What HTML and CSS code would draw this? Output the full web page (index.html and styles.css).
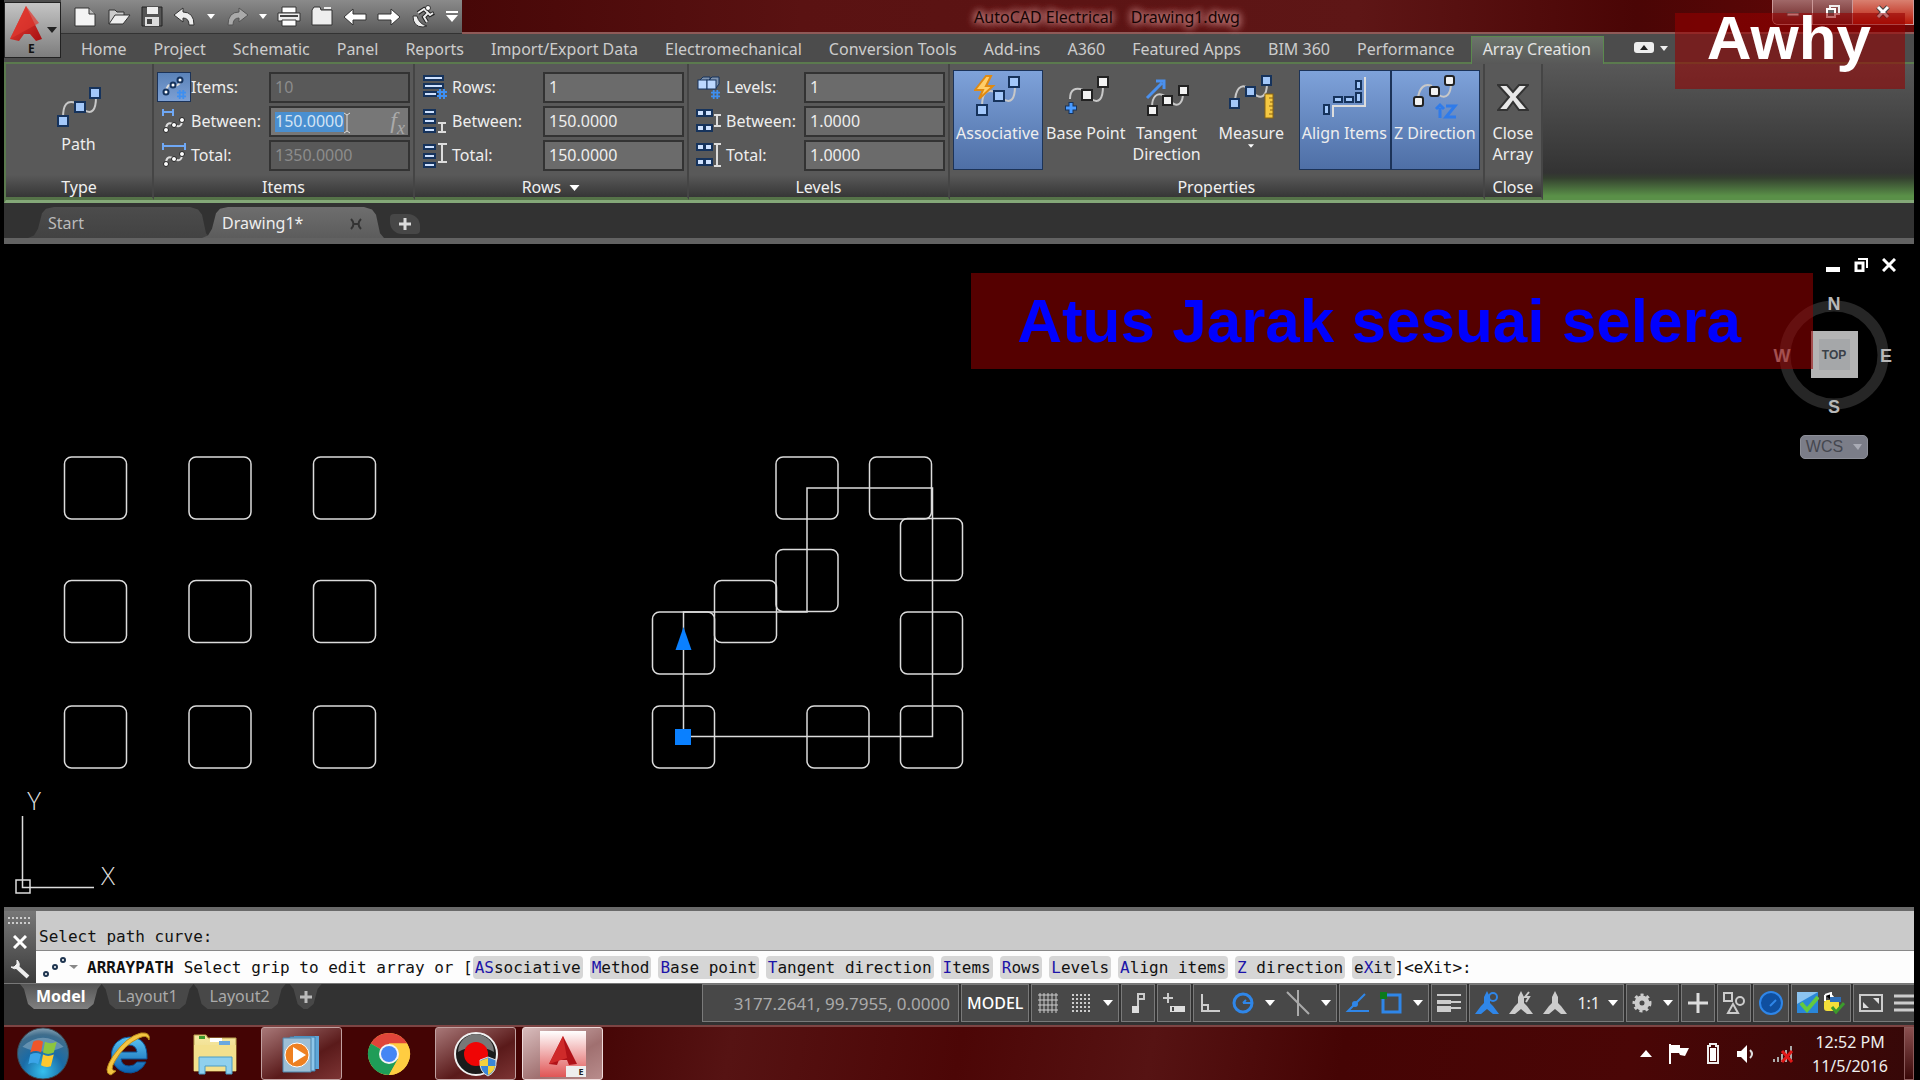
FILE: index.html
```html
<!DOCTYPE html>
<html lang="en">
<head>
    <meta charset="UTF-8">
    <meta name="viewport" content="width=device-width, initial-scale=1.0">
    <title>AutoCAD Electrical - Drawing1.dwg</title>
    <link rel="stylesheet" href="styles.css">
</head>
<body>
    <!-- shared icon shapes -->
    <svg class="defs" aria-hidden="true">
        <defs>
            <linearGradient id="gRed" x1="0" y1="0" x2="1" y2="1">
                <stop offset="0" stop-color="#f04a3c"/><stop offset="1" stop-color="#a50d10"/>
            </linearGradient>
            <radialGradient id="gOrb" cx="0.5" cy="0.85" r="0.9">
                <stop offset="0" stop-color="#35c0ee"/><stop offset="0.45" stop-color="#1a6ba6"/><stop offset="0.8" stop-color="#3f6d8c"/><stop offset="1" stop-color="#9db4c2"/>
            </radialGradient>
            <linearGradient id="gIe" x1="0" y1="0" x2="0" y2="1">
                <stop offset="0" stop-color="#5cc4f2"/><stop offset="1" stop-color="#0a5fae"/>
            </linearGradient>
            <linearGradient id="gFold" x1="0" y1="0" x2="0" y2="1">
                <stop offset="0" stop-color="#f7e9a4"/><stop offset="1" stop-color="#e6cf72"/>
            </linearGradient>
            <linearGradient id="gAcad" x1="0" y1="0" x2="0" y2="1">
                <stop offset="0" stop-color="#fff"/><stop offset="1" stop-color="#e05555"/>
            </linearGradient>
        </defs>
        <symbol id="curve" viewBox="0 0 48 44">
            <path d="M8 32C8 18 12 14 21 17M29 24C37 29 41 24 41 11" fill="none" stroke="#c8c8c8" stroke-width="2"/>
            <g class="sq">
                <rect x="3" y="30" width="10" height="10"/>
                <rect x="20" y="16" width="10" height="10"/>
                <rect x="35" y="2" width="10" height="10"/>
            </g>
        </symbol>
        <symbol id="minicurve" viewBox="0 0 24 18">
            <path d="M4 14Q4 5 11 8M12 9Q20 13 20 4" fill="none" stroke="#ddd" stroke-width="2"/>
            <g fill="#fff" stroke="#222" stroke-width="1">
                <circle cx="4" cy="14" r="2.5"/><circle cx="12" cy="9" r="2.5"/><circle cx="20" cy="4" r="2.5"/>
            </g>
        </symbol>
        <symbol id="down" viewBox="0 0 10 6"><path d="M0 0H10L5 6Z" fill="#fff"/></symbol>
        <symbol id="hash" viewBox="0 0 10 10"><path d="M3 0V10M7 0V10M0 3H10M0 7H10" stroke="#3e8ff0" stroke-width="2" fill="none"/></symbol>
        <symbol id="person" viewBox="0 0 24 24">
            <path d="M12 0L15 6L15 12L18 15L24 23H18L12 18L6 23H0L6 15L9 12L9 6Z" fill="currentColor"/>
        </symbol>
    </svg>

    <div class="window">
        <header class="top">
            <button class="app-button" aria-label="Application menu">
                <svg width="54" height="54" viewBox="0 0 54 54">
                    <path d="M21 3L5 36L14 38L19 31H25L31 38L37 36Z" fill="url(#gRed)"/>
                    <path d="M21 3L5 36L34 20Z" fill="#e0382f" opacity="0.7"/>
                    <path d="M42 24H52L47 30Z" fill="#222"/>
                    <text x="23" y="50" class="app-letter">E</text>
                </svg>
            </button>
            <div class="top-rows">
                <div class="titlebar">
                    <div class="quick">
                        <button aria-label="New"><svg width="24" height="22" viewBox="0 0 24 22"><path d="M2 2H16L22 8V20H2Z" fill="#f4f4f4" stroke="#333"/><path d="M16 2V8H22" fill="#bbb" stroke="#333"/></svg></button>
                        <button aria-label="Open"><svg width="24" height="22" viewBox="0 0 24 22"><path d="M2 18V4H8L10 6H17V9" fill="#ccc" stroke="#333"/><path d="M2 18L8 9H23L16 18Z" fill="#eee" stroke="#333"/></svg></button>
                        <button aria-label="Save"><svg width="22" height="22" viewBox="0 0 22 22"><path d="M1 1H21V20H1Z" fill="#555" stroke="#222"/><path d="M6 1H17V8H6Z" fill="#eee"/><path d="M4 11H18V20H4Z" fill="#ddd"/><path d="M6 13H11V18H6Z" fill="#444"/></svg></button>
                        <button aria-label="Undo"><svg width="24" height="20" viewBox="0 0 24 20"><path d="M1 8L10 1V5Q21 5 21 18H16Q16 11 10 11V15Z" fill="#eee" stroke="#333"/></svg></button>
                        <button class="mini" aria-label="Undo list"><svg width="8" height="5"><use href="#down"/></svg></button>
                        <button aria-label="Redo"><svg width="24" height="20" viewBox="0 0 24 20"><path d="M23 8L14 1V5Q3 5 3 18H8Q8 11 14 11V15Z" fill="#aaa" stroke="#555"/></svg></button>
                        <button class="mini" aria-label="Redo list"><svg width="8" height="5"><use href="#down"/></svg></button>
                        <button aria-label="Plot"><svg width="24" height="22" viewBox="0 0 24 22"><path d="M5 1H19V7H5Z" fill="#fff" stroke="#333"/><path d="M1 7H23V15H1Z" fill="#eee" stroke="#333"/><path d="M3 10H21" stroke="#444" stroke-width="2"/><path d="M5 14H19V20H5Z" fill="#fff" stroke="#333"/></svg></button>
                        <button aria-label="Project manager"><svg width="22" height="22" viewBox="0 0 22 22"><path d="M1 4L3 1H9L10 4H21V19H1Z" fill="#eee" stroke="#333"/><path d="M13 2H20" stroke="#eee" stroke-width="2"/></svg></button>
                        <button aria-label="Previous"><svg width="24" height="20" viewBox="0 0 24 20"><path d="M1 10L10 2V7H23V13H10V18Z" fill="#fff" stroke="#333"/></svg></button>
                        <button aria-label="Next"><svg width="24" height="20" viewBox="0 0 24 20"><path d="M23 10L14 2V7H1V13H14V18Z" fill="#fff" stroke="#333"/></svg></button>
                        <button aria-label="Surfer"><svg width="24" height="24" viewBox="0 0 24 24"><path d="M2 11Q2 22 12 22L16 21Q8 19 6 11Z" fill="#eee" stroke="#333"/><path d="M7 8L13 4L17 8L13 12L16 17M13 4L19 10L23 8" fill="none" stroke="#222" stroke-width="4"/><path d="M7 8L13 4L17 8L13 12L16 17M13 4L19 10L22 8" fill="none" stroke="#eee" stroke-width="2"/><circle cx="17" cy="3" r="2.5" fill="#fff" stroke="#333"/></svg></button>
                        <button class="mini" aria-label="Customize"><svg width="14" height="12" viewBox="0 0 14 12"><path d="M1 1H13" stroke="#fff" stroke-width="2"/><path d="M1 4H13L7 11Z" fill="#fff"/></svg></button>
                    </div>
                    <h1 class="title"><span>AutoCAD Electrical</span><span>Drawing1.dwg</span></h1>
                    <div class="win-buttons">
                        <button aria-label="Minimize"><svg width="14" height="14" viewBox="0 0 14 14"><path d="M1 8H13V11H1Z" fill="#fff" stroke="#555"/></svg></button>
                        <button aria-label="Restore"><svg width="16" height="14" viewBox="0 0 16 14"><path d="M5 1H14V9H5Z" fill="none" stroke="#eee" stroke-width="2"/><path d="M2 4H10V12H2Z" fill="#666" stroke="#fff" stroke-width="2"/></svg></button>
                        <button class="close" aria-label="Close"><svg width="16" height="14" viewBox="0 0 16 14"><path d="M3 2L13 12M13 2L3 12" stroke="#444" stroke-width="5"/><path d="M3 2L13 12M13 2L3 12" stroke="#fff" stroke-width="3"/></svg></button>
                    </div>
                </div>
                <nav class="tabs">
                    <a href="#">Home</a>
                    <a href="#">Project</a>
                    <a href="#">Schematic</a>
                    <a href="#">Panel</a>
                    <a href="#">Reports</a>
                    <a href="#">Import/Export Data</a>
                    <a href="#">Electromechanical</a>
                    <a href="#">Conversion Tools</a>
                    <a href="#">Add-ins</a>
                    <a href="#">A360</a>
                    <a href="#">Featured Apps</a>
                    <a href="#">BIM 360</a>
                    <a href="#">Performance</a>
                    <a href="#" class="active">Array Creation</a>
                    <button class="collapse" aria-label="Minimize ribbon">
                        <svg width="34" height="12" viewBox="0 0 34 12"><rect x="0" y="0" width="20" height="11" rx="3" fill="#eee"/><path d="M6 8H14L10 3Z" fill="#222"/><path d="M26 4H34L30 9Z" fill="#eee"/></svg>
                    </button>
                </nav>
            </div>
        </header>

        <section class="ribbon">
            <div class="panel type-panel">
                <div class="panel-body">
                    <button class="tool">
                        <svg class="blue" width="48" height="44"><use href="#curve"/></svg>
                        Path
                    </button>
                </div>
                <h2>Type</h2>
            </div>

            <div class="panel">
                <div class="panel-body fields">
                    <button class="field-icon on" aria-label="Item count"><svg width="26" height="26" viewBox="0 0 26 26"><path d="M5 18Q6 9 12 11Q18 13 20 6" fill="none" stroke="#ddd" stroke-width="2"/><g fill="#fff" stroke="#16335c" stroke-width="2"><circle cx="5" cy="18" r="2.5"/><circle cx="12" cy="11" r="2.5"/><circle cx="19" cy="6" r="2.5"/></g><use href="#hash" x="16" y="16" width="9" height="9"/></svg></button>
                    <label for="items">Items:</label>
                    <input id="items" type="text" value="10" disabled>

                    <svg class="field-icon" width="26" height="26" viewBox="0 0 26 26"><path d="M2 1V8M12 1V8M2 4H12" stroke="#6fa8f5" stroke-width="2" fill="none"/><use href="#minicurve" x="1" y="8" width="24" height="18"/></svg>
                    <label for="itemsBetween">Between:</label>
                    <div class="fx-field">
                        <input id="itemsBetween" class="selected" type="text" value="150.0000">
                        <svg class="caret" width="8" height="22" viewBox="0 0 8 22"><path d="M1 1L4 3L7 1M4 3V19M1 21L4 19L7 21" fill="none" stroke="#ddd"/></svg>
                        <span class="fx">f<sub>x</sub></span>
                    </div>

                    <svg class="field-icon" width="26" height="26" viewBox="0 0 26 26"><path d="M2 1V8M24 1V8M2 4H24" stroke="#6fa8f5" stroke-width="2" fill="none"/><use href="#minicurve" x="1" y="8" width="24" height="18"/></svg>
                    <label for="itemsTotal">Total:</label>
                    <input id="itemsTotal" type="text" value="1350.0000" disabled>
                </div>
                <h2>Items</h2>
            </div>

            <div class="panel">
                <div class="panel-body fields rows-fields">
                    <svg class="field-icon" width="26" height="26" viewBox="0 0 26 26"><g fill="#cfe2ff" stroke="#16335c" stroke-width="2"><rect x="2" y="2" width="19" height="4"/><rect x="2" y="10" width="19" height="4"/><rect x="2" y="18" width="13" height="4"/></g><use href="#hash" x="15" y="15" width="10" height="10"/></svg>
                    <label for="rows">Rows:</label>
                    <input id="rows" type="text" value="1">

                    <svg class="field-icon" width="26" height="26" viewBox="0 0 26 26"><g fill="#cfe2ff" stroke="#16335c" stroke-width="2"><rect x="2" y="2" width="11" height="4"/><rect x="2" y="11" width="11" height="4"/><rect x="2" y="20" width="11" height="4"/></g><path d="M16 15H24M16 24H24M20 15V24" stroke="#ddd" stroke-width="2"/></svg>
                    <label for="rowsBetween">Between:</label>
                    <input id="rowsBetween" type="text" value="150.0000">

                    <svg class="field-icon" width="26" height="26" viewBox="0 0 26 26"><g fill="#cfe2ff" stroke="#16335c" stroke-width="2"><rect x="2" y="3" width="11" height="4"/><rect x="2" y="12" width="11" height="4"/><rect x="2" y="21" width="11" height="4"/></g><path d="M16 2H25M16 20H25M20 2V20" stroke="#ddd" stroke-width="2"/></svg>
                    <label for="rowsTotal">Total:</label>
                    <input id="rowsTotal" type="text" value="150.0000">
                </div>
                <h2>Rows <svg width="11" height="6"><use href="#down"/></svg></h2>
            </div>

            <div class="panel">
                <div class="panel-body fields">
                    <svg class="field-icon" width="26" height="26" viewBox="0 0 26 26"><path d="M3 7L7 3H14V10M12 7L16 3H23V10L20 14" fill="#7f93ad" stroke="#16335c"/><g fill="#bcd8ff" stroke="#16335c"><rect x="2" y="6" width="9" height="9"/><rect x="11" y="6" width="9" height="9"/></g><use href="#hash" x="15" y="16" width="9" height="9"/></svg>
                    <label for="levels">Levels:</label>
                    <input id="levels" type="text" value="1">

                    <svg class="field-icon" width="26" height="26" viewBox="0 0 26 26"><g fill="#cfe2ff" stroke="#16335c" stroke-width="2"><rect x="1" y="2" width="7" height="6"/><rect x="9" y="2" width="7" height="6"/><rect x="1" y="17" width="7" height="6"/><rect x="9" y="17" width="7" height="6"/></g><path d="M18 7H25M18 18H25M21 7V18" stroke="#ddd" stroke-width="2"/></svg>
                    <label for="levelsBetween">Between:</label>
                    <input id="levelsBetween" type="text" value="1.0000">

                    <svg class="field-icon" width="26" height="26" viewBox="0 0 26 26"><g fill="#cfe2ff" stroke="#16335c" stroke-width="2"><rect x="1" y="2" width="7" height="6"/><rect x="9" y="2" width="7" height="6"/><rect x="1" y="17" width="7" height="6"/><rect x="9" y="17" width="7" height="6"/></g><path d="M18 2H25M18 24H25M21 2V24" stroke="#ddd" stroke-width="2"/></svg>
                    <label for="levelsTotal">Total:</label>
                    <input id="levelsTotal" type="text" value="1.0000">
                </div>
                <h2>Levels</h2>
            </div>

            <div class="panel">
                <div class="panel-body tools">
                    <button class="tool on">
                        <svg class="blue" width="48" height="44"><use href="#curve"/><path d="M12 1L1 15H9L5 24L19 11H12L17 1Z" fill="#ffcf6a" stroke="#e08a12" stroke-width="2"/></svg>
                        Associative
                    </button>
                    <button class="tool">
                        <svg class="white" width="48" height="44" viewBox="0 0 48 44"><path d="M8 24C8 14 14 12 21 15M29 24C37 29 41 24 41 11" fill="none" stroke="#c8c8c8" stroke-width="2"/><g class="sq"><rect x="20" y="15" width="10" height="10"/><rect x="36" y="2" width="10" height="10"/></g><path d="M9 27V39M3 33H15" stroke="#16335c" stroke-width="5"/><path d="M9 28V38M4 33H14" stroke="#4a9bff" stroke-width="3"/></svg>
                        Base Point
                    </button>
                    <button class="tool">
                        <svg class="white" width="48" height="44" viewBox="0 0 48 44"><path d="M9 32C9 22 14 16 22 21M27 26C36 35 40 26 40 18" fill="none" stroke="#c8c8c8" stroke-width="2"/><g class="sq"><rect x="5" y="31" width="9" height="9"/><rect x="20" y="21" width="9" height="9"/><rect x="36" y="11" width="9" height="9"/></g><path d="M4 23L19 8M13 6H21V14" fill="none" stroke="#4a90ee" stroke-width="3"/></svg>
                        Tangent<br>Direction
                    </button>
                    <button class="tool measure">
                        <svg class="blue" width="48" height="44" viewBox="0 0 48 44"><path d="M8 28C8 14 14 8 21 13M26 18C34 25 40 22 40 8" fill="none" stroke="#c8c8c8" stroke-width="2"/><g class="sq"><rect x="3" y="24" width="9" height="9"/><rect x="19" y="12" width="9" height="9"/><rect x="35" y="1" width="9" height="9"/></g><rect x="38" y="19" width="8" height="24" fill="#f5c842" stroke="#8a6510"/><path d="M42 23H46M43 27H46M42 31H46M43 35H46M42 39H46" stroke="#8a6510"/></svg>
                        Measure
                        <svg width="6" height="4"><use href="#down"/></svg>
                    </button>
                    <button class="tool on">
                        <svg class="blue" width="48" height="44" viewBox="0 0 48 44"><path d="M13 42V31H45V2" fill="none" stroke="#ddd" stroke-width="2"/><g class="sq"><rect x="4" y="30" width="5" height="9"/><rect x="14" y="22" width="8" height="5"/><rect x="25" y="22" width="8" height="5"/><rect x="36" y="18" width="5" height="9"/><rect x="36" y="6" width="5" height="8"/></g></svg>
                        Align Items
                    </button>
                    <button class="tool on">
                        <svg class="white" width="48" height="44" viewBox="0 0 48 44"><path d="M7 24C8 12 14 8 21 11M28 20C36 25 40 18 40 8" fill="none" stroke="#c8c8c8" stroke-width="2"/><g class="sq"><rect x="3" y="22" width="9" height="9" rx="2"/><rect x="19" y="12" width="9" height="9" rx="2"/><rect x="34" y="1" width="9" height="9" rx="2"/></g><path d="M29 43V33M25 34L29 30L33 34M35 31H44L35 42H45" fill="none" stroke="#2f7bea" stroke-width="3"/></svg>
                        Z Direction
                    </button>
                </div>
                <h2>Properties</h2>
            </div>

            <div class="panel">
                <div class="panel-body">
                    <button class="tool close-array">
                        <svg width="32" height="44" viewBox="0 0 32 44"><path d="M1 10H10L16 17L22 10H31L20 22L31 35H22L16 27L10 35H1L12 22Z" fill="#e8e8e8" stroke="#333" stroke-width="2"/></svg>
                        Close<br>Array
                    </button>
                </div>
                <h2>Close</h2>
            </div>
        </section>

        <div class="file-tabs">
            <button class="file-tab">Start</button>
            <div class="file-tab active">
                <button class="file-name">Drawing1*</button>
                <button class="file-close" aria-label="Close drawing"><svg width="12" height="12" viewBox="0 0 12 12"><path d="M1 1Q6 6 1 11M11 1Q6 6 11 11M3 6H9" fill="none" stroke="#333" stroke-width="2"/></svg></button>
            </div>
            <button class="file-add" aria-label="New drawing"><svg width="12" height="12" viewBox="0 0 12 12"><path d="M6 0V12M0 6H12" stroke="#ddd" stroke-width="3"/></svg></button>
        </div>

        <main class="canvas">
            <svg class="drawing">
                <defs><rect id="box" width="62" height="62" rx="7"/></defs>
                <g transform="translate(-4 -244)" fill="none" stroke="#dcdcdc" stroke-width="1.5">
                    <!-- 3 x 3 rectangular array -->
                    <use href="#box" x="64.5" y="457"/><use href="#box" x="189" y="457"/><use href="#box" x="313.5" y="457"/>
                    <use href="#box" x="64.5" y="580.5"/><use href="#box" x="189" y="580.5"/><use href="#box" x="313.5" y="580.5"/>
                    <use href="#box" x="64.5" y="706"/><use href="#box" x="189" y="706"/><use href="#box" x="313.5" y="706"/>
                    <!-- path array -->
                    <path d="M683.5 736.5V612H807V488H932.5V736.5Z"/>
                    <use href="#box" x="652.5" y="706"/>
                    <use href="#box" x="652.5" y="612"/>
                    <use href="#box" x="714.5" y="580.5"/>
                    <use href="#box" x="776" y="549.5"/>
                    <use href="#box" x="776" y="457"/>
                    <use href="#box" x="869.5" y="457"/>
                    <use href="#box" x="900.5" y="518.5"/>
                    <use href="#box" x="900.5" y="612"/>
                    <use href="#box" x="900.5" y="706"/>
                    <use href="#box" x="807" y="706"/>
                    <path d="M683.5 627L691.5 650H675.5Z" fill="#0a80ff" stroke="none"/>
                    <rect x="675" y="729" width="16" height="16" fill="#0a80ff" stroke="none"/>
                    <!-- UCS icon -->
                    <path d="M22.5 816V887.5H94M16 880H30V893H16Z"/>
                    <text class="ucs" x="34" y="810">Y</text>
                    <text class="ucs" x="108" y="885">X</text>
                </g>
            </svg>

            <div class="view-tools">
                <div class="view-buttons">
                    <button aria-label="Minimize view"><svg width="14" height="14"><rect x="0" y="9" width="14" height="5" fill="#fff"/></svg></button>
                    <button aria-label="Restore view"><svg width="14" height="14"><path d="M4 1H13V10" fill="none" stroke="#fff" stroke-width="2"/><path d="M2 5H9V13H2Z" fill="none" stroke="#fff" stroke-width="3"/></svg></button>
                    <button aria-label="Close view"><svg width="14" height="14"><path d="M1 1L13 13M13 1L1 13" stroke="#fff" stroke-width="3"/></svg></button>
                </div>
                <svg class="compass" width="124" height="130" viewBox="-2 0 124 130">
                    <circle cx="60" cy="64" r="49" fill="none" stroke="#262626" stroke-width="11"/>
                    <rect x="37" y="40" width="47" height="47" fill="#b4b4b4"/>
                    <rect x="45" y="48" width="31" height="31" fill="#a5a7a9"/>
                    <text class="top-face" x="60" y="68">TOP</text>
                    <text x="60" y="19">N</text>
                    <text x="60" y="122">S</text>
                    <text x="8" y="71">W</text>
                    <text x="112" y="71">E</text>
                </svg>
                <button class="wcs">WCS <svg width="9" height="6"><path d="M0 0H9L5 6Z" fill="#a9abb5"/></svg></button>
            </div>
            <p class="banner">Atus Jarak sesuai selera</p>
        </main>

        <section class="command">
            <div class="command-side">
                <svg width="24" height="8" viewBox="0 0 24 8"><path d="M0 1H24M0 6H24" stroke="#ccc" stroke-width="2" stroke-dasharray="2 2"/></svg>
                <button aria-label="Close command line"><svg width="14" height="14"><path d="M1 1L13 13M13 1L1 13" stroke="#fff" stroke-width="3"/></svg></button>
                <button aria-label="Customize command line"><svg width="20" height="20" viewBox="0 0 20 20"><path d="M7 8L18 18" stroke="#eee" stroke-width="4"/><path d="M7 1Q11 5 8 9Q4 11 1 8L4 8L7 5Z" fill="#eee" stroke="#eee"/></svg></button>
            </div>
            <div class="command-text">
                <div class="history">Select path curve:</div>
                <div class="prompt">
                    <svg width="36" height="22" viewBox="0 0 36 22"><g fill="#fff" stroke="#1f3550" stroke-width="2"><circle cx="3" cy="18" r="2"/><circle cx="12" cy="11" r="2"/><circle cx="20" cy="4" r="2"/></g><path d="M26 9H35L31 13Z" fill="#888"/></svg>
                    <b>ARRAYPATH</b>
                    <span>Select grip to edit array or [</span>
                    <button><i>AS</i>sociative</button>
                    <button><i>M</i>ethod</button>
                    <button><i>B</i>ase point</button>
                    <button><i>T</i>angent direction</button>
                    <button><i>I</i>tems</button>
                    <button><i>R</i>ows</button>
                    <button><i>L</i>evels</button>
                    <button><i>A</i>lign items</button>
                    <button><i>Z</i> direction</button>
                    <button>e<i>X</i>it</button>
                    <span>]&lt;eXit&gt;:</span>
                </div>
            </div>
        </section>

        <footer class="status">
            <div class="layouts">
                <button class="active">Model</button>
                <button>Layout1</button>
                <button>Layout2</button>
                <button class="add" aria-label="New layout"><svg width="12" height="12"><path d="M6 0V12M0 6H12" stroke="#bbb" stroke-width="3"/></svg></button>
            </div>
            <div class="status-cells">
                <div class="cell coords">3177.2641, 99.7955, 0.0000</div>
                <button class="cell model">MODEL</button>
                <div class="cell">
                    <button aria-label="Grid"><svg width="22" height="22"><path d="M3 1V21M7 1V21M11 1V21M15 1V21M19 1V21M1 3H21M1 8H21M1 13H21M1 18H21" stroke="#ccc" fill="none"/></svg></button>
                    <button aria-label="Snap mode"><svg width="22" height="22"><path d="M2 3H22M2 7H22M2 11H22M2 15H22M2 19H22" stroke="#ccc" stroke-width="2" stroke-dasharray="2 2"/></svg></button>
                    <button aria-label="Snap list"><svg width="10" height="6"><use href="#down"/></svg></button>
                </div>
                <button class="cell" aria-label="Infer constraints"><svg width="22" height="22"><path d="M11 15V2H17V7H12" fill="none" stroke="#ccc" stroke-width="2"/><rect x="5" y="14" width="7" height="7" fill="#ddd"/></svg></button>
                <button class="cell" aria-label="Dynamic input"><svg width="22" height="22"><path d="M5 1V11M0 6H10" stroke="#ccc" stroke-width="2"/><rect x="7" y="14" width="15" height="6" fill="#ddd"/><path d="M10 15V19" stroke="#444" stroke-width="2"/></svg></button>
                <div class="cell">
                    <button aria-label="Ortho"><svg width="22" height="22"><path d="M3 2V19H21M3 13H9V19" fill="none" stroke="#ccc" stroke-width="2"/></svg></button>
                    <button aria-label="Polar tracking"><svg width="22" height="22"><circle cx="11" cy="11" r="9" fill="none" stroke="#2f86e8" stroke-width="3"/><path d="M11 11H21M14 8L11 11" stroke="#2f86e8" stroke-width="2"/></svg></button>
                    <button aria-label="Polar list"><svg width="10" height="6"><use href="#down"/></svg></button>
                    <button aria-label="Isometric"><svg width="24" height="26"><path d="M1 2L23 24M12 0V26" stroke="#aaa" stroke-width="2"/></svg></button>
                    <button aria-label="Isometric list"><svg width="10" height="6"><use href="#down"/></svg></button>
                </div>
                <div class="cell">
                    <button aria-label="Object snap tracking"><svg width="24" height="22"><path d="M20 2L3 19H24" fill="none" stroke="#2f86e8" stroke-width="2"/><circle cx="10" cy="12" r="3" fill="#2f86e8"/></svg></button>
                    <button aria-label="Object snap"><svg width="22" height="22"><rect x="3" y="3" width="17" height="17" fill="none" stroke="#2f86e8" stroke-width="3"/><rect x="0" y="0" width="7" height="7" fill="#0c7a1c"/></svg></button>
                    <button aria-label="Snap settings"><svg width="10" height="6"><use href="#down"/></svg></button>
                </div>
                <button class="cell" aria-label="Lineweight"><svg width="24" height="22"><path d="M0 3H24M0 10H24M14 16H24" stroke="#ccc" stroke-width="2"/><path d="M0 10H14" stroke="#ccc" stroke-width="4"/><path d="M0 17H14" stroke="#ccc" stroke-width="6"/></svg></button>
                <div class="cell scales">
                    <button class="lit" aria-label="Annotation visibility"><svg width="24" height="24"><use href="#person"/><circle cx="18" cy="6" r="4" fill="#484848" stroke="#2f86e8" stroke-width="2"/></svg></button>
                    <button aria-label="Auto scale"><svg width="24" height="24"><use href="#person"/><path d="M20 1L16 6H20L17 11" fill="none" stroke="#ccc" stroke-width="2"/></svg></button>
                    <button aria-label="Annotation"><svg width="24" height="24"><use href="#person"/></svg></button>
                    <button class="scale">1:1 <svg width="10" height="6"><use href="#down"/></svg></button>
                </div>
                <div class="cell">
                    <button aria-label="Workspace"><svg width="20" height="20" viewBox="0 0 20 20"><circle cx="10" cy="10" r="5" fill="none" stroke="#ccc" stroke-width="5"/><circle cx="10" cy="10" r="8" fill="none" stroke="#ccc" stroke-width="3" stroke-dasharray="3 3"/></svg></button>
                    <button aria-label="Workspace list"><svg width="10" height="6"><use href="#down"/></svg></button>
                </div>
                <button class="cell" aria-label="Annotation monitor"><svg width="22" height="22"><path d="M11 1V21M1 11H21" stroke="#ddd" stroke-width="3"/></svg></button>
                <button class="cell" aria-label="Isolate objects"><svg width="22" height="22"><path d="M1 1H9V9H1ZM10 12L15 21H5Z" fill="none" stroke="#ccc" stroke-width="2"/><circle cx="17" cy="9" r="4" fill="none" stroke="#ccc" stroke-width="2"/></svg></button>
                <button class="cell" aria-label="Hardware acceleration"><svg width="24" height="24"><circle cx="12" cy="12" r="11" fill="#0f4f9f" stroke="#2f86e8" stroke-width="2"/><path d="M11 15L17 9" stroke="#2f86e8" stroke-width="2"/></svg></button>
                <div class="cell tight">
                    <button aria-label="Validate"><svg width="22" height="22"><rect width="21" height="21" fill="#2a86d8"/><path d="M0 0H21L0 12Z" fill="#8cc4f0"/><path d="M4 11L10 18L21 5" fill="none" stroke="#63c93f" stroke-width="4"/></svg></button>
                    <button aria-label="Trusted DWG"><svg width="22" height="22"><rect x="1" y="8" width="15" height="11" rx="3" fill="#f3df3a"/><path d="M2 9V3M2 3L8 1V8M8 3L13 9" stroke="#fff" stroke-width="2"/><rect x="7" y="5" width="11" height="5" fill="#2f6fb8"/><path d="M9 15L13 20L21 11" fill="none" stroke="#3c9a2c" stroke-width="3"/></svg></button>
                </div>
                <div class="cell last">
                    <button aria-label="Clean screen"><svg width="24" height="20"><rect x="1" y="2" width="22" height="16" fill="none" stroke="#ccc" stroke-width="2"/><path d="M4 15V9L10 15ZM20 5V11L14 5Z" fill="#ddd"/></svg></button>
                    <button aria-label="Customization"><svg width="20" height="20"><path d="M0 3H20M0 10H20M0 17H20" stroke="#ccc" stroke-width="3"/></svg></button>
                </div>
            </div>
        </footer>
    </div>

    <div class="taskbar">
        <button class="start" aria-label="Start">
            <svg width="54" height="53" viewBox="0 0 54 54">
                <circle cx="27" cy="27" r="26" fill="url(#gOrb)" stroke="#3a4a55"/>
                <path d="M6 20Q27 2 48 20Q27 30 6 20Z" fill="#fff" opacity="0.25"/>
                <path d="M17 15Q22 12 27 15L25 26Q20 23 14 26Z" fill="#f0562a"/>
                <path d="M29 15Q35 18 41 15L38 26Q32 29 27 26Z" fill="#8cc63e"/>
                <path d="M14 28Q20 25 25 28L22 38Q17 35 12 38Z" fill="#3ba5e8"/>
                <path d="M27 28Q32 31 38 28L35 40Q30 42 25 39Z" fill="#fdc82f"/>
            </svg>
        </button>
        <button class="task" aria-label="Internet Explorer">
            <svg width="48" height="46" viewBox="0 0 48 46">
                <path d="M25 6A18 18 0 1 0 42 31H33Q30 35 25 35Q18 35 17 28H43Q44 6 25 6ZM17 21Q19 14 25 14Q32 14 33 21Z" fill="url(#gIe)" stroke="#0a4f92"/>
                <path d="M7 44Q-2 42 9 25Q23 5 37 2Q47 1 45 9Q43 3 35 7Q20 14 11 30Q5 40 12 40Z" fill="#f4c542" stroke="#b98a1a"/>
            </svg>
        </button>
        <button class="task" aria-label="Windows Explorer">
            <svg width="46" height="42" viewBox="0 0 46 42">
                <path d="M2 2H14L16 5H44V38H2Z" fill="url(#gFold)" stroke="#b9a04d"/>
                <path d="M7 3H13V6H7Z" fill="#3c9a2c"/><path d="M18 5H30V9H18Z" fill="#fff"/><path d="M27 8H38V12H27Z" fill="#6aa8e0"/>
                <path d="M2 12H44V38H2Z" fill="#f3e08d"/>
                <path d="M7 41V24H40V41H34V33H13V41Z" fill="#8fd0ee" stroke="#4a9cc4"/>
            </svg>
        </button>
        <button class="task open" aria-label="Windows Media Player">
            <svg width="40" height="38" viewBox="0 0 40 38">
                <path d="M12 1H37V34H12Z" fill="#5ea6d8"/><path d="M8 2H33V36H8Z" fill="#8ec6ea" stroke="#3c7fae"/>
                <path d="M1 3H29V37H1Z" fill="#9dbfd6" stroke="#4c84ab"/>
                <circle cx="15" cy="20" r="12" fill="#ee8021" stroke="#fff"/><path d="M11 12L24 20L11 28Z" fill="#fff"/>
            </svg>
        </button>
        <button class="task" aria-label="Chrome">
            <svg width="44" height="44" viewBox="0 0 44 44">
                <circle cx="22" cy="22" r="21" fill="#ffcd41"/>
                <path d="M22 22L3.8 11.5A21 21 0 0 1 40.2 11.5H22Z" fill="#e0453a"/>
                <path d="M22 22L3.8 11.5A21 21 0 0 0 22 43L31 27Z" fill="#1f9d58"/>
                <path d="M22 11.5H40.2A21 21 0 0 1 22 43L31 27Z" fill="#ffcd41"/>
                <circle cx="22" cy="22" r="10" fill="#f4f4f4"/><circle cx="22" cy="22" r="8" fill="#4486f4"/>
            </svg>
        </button>
        <button class="task open" aria-label="Recorder">
            <svg width="48" height="48" viewBox="0 0 48 48">
                <circle cx="24" cy="24" r="21" fill="#1b1b1b" stroke="#f0f0f0" stroke-width="2"/>
                <path d="M6 22A18 18 0 0 1 42 22Q24 12 6 22Z" fill="#777"/>
                <circle cx="24" cy="24" r="12" fill="#f00505"/>
                <path d="M36 27L44 30Q45 42 36 46Q27 42 28 30Z" fill="#3a86d8" stroke="#ddd"/>
                <path d="M36 28V36H28L28 31ZM36 36H43Q42 42 36 45Z" fill="#f5d13c"/>
            </svg>
        </button>
        <button class="task open current" aria-label="AutoCAD Electrical">
            <svg width="46" height="46" viewBox="0 0 46 46">
                <rect width="46" height="46" fill="url(#gAcad)"/>
                <path d="M23 5L9 33L17 34L19 29H27L29 34L37 33Z" fill="#b01218"/><path d="M23 5L9 33L27 27Z" fill="#cf2a2a"/>
                <rect x="26" y="35" width="20" height="11" fill="#eee"/>
                <text class="task-letter" x="41" y="44">E</text>
            </svg>
        </button>
        <div class="tray">
            <button aria-label="Hidden icons"><svg width="12" height="7"><path d="M0 7L6 0L12 7Z" fill="#fff"/></svg></button>
            <button aria-label="Action center"><svg width="22" height="22"><path d="M2 1V21" stroke="#fff" stroke-width="2"/><path d="M3 2H12V5H21L17 13L12 12L11 10H3Z" fill="#fff"/></svg></button>
            <button aria-label="Battery"><svg width="14" height="22"><path d="M2 3H4V1H10V3H12V20H2Z" fill="none" stroke="#eee" stroke-width="2"/><rect x="4" y="5" width="6" height="13" fill="#fff"/></svg></button>
            <button aria-label="Volume"><svg width="20" height="20"><path d="M1 7H5L11 1V19L5 13H1Z" fill="#fff"/><path d="M14 6Q18 10 14 14" fill="none" stroke="#ddd" stroke-width="2"/></svg></button>
            <button aria-label="Network"><svg width="24" height="18"><path d="M2 14V17M6 12V17M10 9V17M14 5V17M19 1V17" stroke="#aaa" stroke-width="2"/><path d="M10 6L20 17M20 6L10 17" stroke="#e01818" stroke-width="3"/></svg></button>
            <div class="clock"><time>12:52 PM</time><time>11/5/2016</time></div>
            <button class="show-desktop" aria-label="Show desktop"></button>
        </div>
    </div>

    <p class="watermark">Awhy</p>
</body>
</html>
```
FILE: styles.css
```css
* {
    box-sizing: border-box;
}

body {
    margin: 0;
    padding: 0 6px 0 4px;
    min-height: 100vh;
    display: flex;
    flex-direction: column;
    position: relative;
    background: #000;
    color: #eee;
    font-family: 'Noto Sans', 'Open Sans', sans-serif;
    font-size: 16px;
    line-height: 21px;
}

button {
    margin: 0;
    padding: 0;
    border: none;
    background: none;
    color: inherit;
    font: inherit;
    cursor: pointer;
}

button svg {
    display: block;
}

a {
    color: inherit;
    text-decoration: none;
}

h1, h2, p {
    margin: 0;
    font-size: 16px;
    font-weight: normal;
}

.defs {
    position: absolute;
    width: 0;
    height: 0;
}

.sq {
    stroke: #16335c;
    stroke-width: 2px;
}

.blue {
    fill: #a3c8fa;
}

.white {
    fill: #f2f2f2;
}

.white .sq {
    stroke: #222;
}

.window {
    flex: 1;
    display: flex;
    flex-direction: column;
}

/* title bar and ribbon tabs */
.top {
    display: flex;
    background: #4c4c4c;
    border-bottom: 2px solid #5b7a4e;
}

.app-button {
    width: 57px;
    height: 56px;
    margin-top: 2px;
    background: linear-gradient(#c4c4c4, #7d7d7d);
    border: 1px solid #222;
}

.app-letter {
    font: bold 12px 'Open Sans', sans-serif;
    fill: #111;
}

.top-rows {
    flex: 1;
}

.titlebar {
    display: flex;
    height: 34px;
    background: linear-gradient(90deg, #5c1212, #450606 20%, #5a1212 40%, #5e1616 70%, #4a0505 85%, #6a0808);
    border-bottom: 2px solid #8f5a58;
}

.quick {
    display: flex;
    align-items: center;
    gap: 10px;
    height: 34px;
    padding: 0 3px 0 12px;
    background: linear-gradient(#8a8a8a, #5a5a5a);
    border-bottom: 1px solid #333;
}

.title {
    flex: 1;
    display: flex;
    justify-content: center;
    gap: 18px;
    padding-right: 20px;
    line-height: 34px;
    color: #160404;
    text-shadow: 0 0 10px #d99, 0 0 10px #d99, 0 0 6px #b77;
}

.win-buttons {
    display: flex;
    height: 25px;
    border: 1px solid #c99;
    border-top: none;
    border-radius: 0 0 0 6px;
    overflow: hidden;
}

.win-buttons button {
    width: 40px;
    display: flex;
    align-items: center;
    justify-content: center;
    background: linear-gradient(#a06868, #6a2020);
    border-right: 1px solid #c99;
}

.win-buttons .close {
    width: 60px;
    background: linear-gradient(#d98070, #b81808);
    border: none;
}

.tabs {
    display: flex;
    height: 28px;
    padding-left: 7px;
    color: #ccc;
}

.tabs a {
    padding: 0 14px 0 13px;
    line-height: 30px;
}

.tabs .active {
    height: 28px;
    margin: 2px 0 0 2px;
    padding: 0 12px 0 11px;
    line-height: 25px;
    background: linear-gradient(#6b746a, #585858);
    border: 1px solid #5b8a4e;
    border-bottom: none;
    color: #e4e4e4;
}

.collapse {
    margin-left: 30px;
}

/* ribbon */
.ribbon {
    display: flex;
    height: 139px;
    background: linear-gradient(#585858, #484848 35%, #333 80%, #34402f 84%, #5a9048 97%);
    border: 2px solid #5b7a4e;
    border-top: none;
    border-right: none;
    border-bottom: 3px solid #84a878;
}

.panel {
    display: flex;
    flex-direction: column;
    background: #595959;
    border-right: 2px solid #454545;
    border-bottom: 3px solid #557348;
}

.panel-body {
    flex: 1;
    padding: 6px 3px 0;
}

.panel h2 {
    height: 22px;
    line-height: 24px;
    text-align: center;
    background: linear-gradient(#595959, #363636);
    color: #f0f0f0;
}

.panel h2 svg {
    margin-left: 4px;
    vertical-align: 2px;
}

.type-panel {
    width: 148px;
}

.type-panel .panel-body {
    padding-top: 17px;
}

.type-panel .tool {
    height: 84px;
    margin: 0 auto;
}

.fields {
    display: grid;
    grid-template-columns: 34px 78px auto;
    grid-auto-rows: 30px;
    row-gap: 4px;
    align-content: start;
    align-items: center;
    padding-top: 8px;
}

.rows-fields {
    grid-template-columns: 34px 91px auto;
}

.field-icon {
    justify-self: center;
}

button.field-icon {
    width: 34px;
    height: 30px;
    display: flex;
    align-items: center;
    justify-content: center;
    background: linear-gradient(#5a82b8, #7da0d4);
    border: 1px solid #1c3358;
}

.fields input {
    width: 141px;
    height: 31px;
    padding: 0 4px;
    background: #6b6b6b;
    border: 2px solid #333;
    color: #eee;
    font: inherit;
}

.fields input:disabled {
    background: #595959;
    color: #8c8c8c;
}

.fx-field {
    position: relative;
}

/* highlighted text of the focused field */
.fields .selected {
    background: linear-gradient(#4a8fd0, #4a8fd0) 4px 4px / 69px 20px no-repeat #777;
    color: #d4e4f4;
}

.caret {
    position: absolute;
    left: 74px;
    top: 6px;
}

.fx {
    position: absolute;
    right: 5px;
    top: 2px;
    color: #aaa;
    font: italic 24px/24px 'Liberation Serif', serif;
}

.fx sub {
    font-size: 18px;
    line-height: 0;
}

.tools {
    display: flex;
    align-items: flex-start;
}

.tool {
    height: 100px;
    padding: 4px 3px 0 2px;
    display: flex;
    flex-direction: column;
    align-items: center;
    border: 1px solid transparent;
}

.tool > svg:first-child {
    margin-bottom: 4px;
    flex-shrink: 0;
}

.tool.on {
    background: linear-gradient(#7ea2da, #4e6fa6);
    border-color: #1c3358;
}

.measure {
    min-width: 94px;
}

.close-array {
    padding: 4px 4px 0;
    text-align: left;
}

/* drawing file tabs */
.file-tabs {
    display: flex;
    align-items: flex-end;
    height: 41px;
    padding-left: 24px;
    background: #323232;
    border-bottom: 6px solid #626262;
}

.file-tab {
    display: flex;
    align-items: center;
    justify-content: space-between;
    width: 182px;
    height: 31px;
    padding: 2px 22px 0 20px;
    background: linear-gradient(#4c4c4c, #424242);
    color: #bbb;
    clip-path: polygon(0 100%, 6px 92%, 10px 70%, 14px 20%, 18px 6%, 26px 0, calc(100% - 20px) 0, calc(100% - 12px) 8%, calc(100% - 8px) 25%, calc(100% - 4px) 85%, 100% 100%);
}

.file-tab.active {
    margin-left: -8px;
    background: linear-gradient(#6e6e6e, #5c5c5c);
    color: #eee;
}

.file-add {
    display: flex;
    align-items: center;
    justify-content: center;
    width: 30px;
    height: 20px;
    margin: 0 0 4px 6px;
    background: #474747;
    border-radius: 4px 12px 4px 12px;
}

/* model space */
.canvas {
    flex: 1;
    position: relative;
    background: #000;
}

.drawing {
    position: absolute;
    inset: 0;
    width: 100%;
    height: 100%;
}

.ucs {
    font: 300 26px 'Open Sans', sans-serif;
    text-anchor: middle;
    fill: #dcdcdc;
    stroke: none;
}

.view-tools {
    position: absolute;
    top: 14px;
    right: 18px;
    display: flex;
    flex-direction: column;
    align-items: center;
}

.view-buttons {
    display: flex;
    align-self: flex-end;
    gap: 14px;
}

.compass {
    margin: 19px 0 14px;
}

.compass text {
    font: bold 18px 'Liberation Sans', sans-serif;
    text-anchor: middle;
    fill: #b8b8b8;
}

.compass .top-face {
    font-size: 12px;
    fill: #3a4048;
}

.wcs {
    display: flex;
    align-items: center;
    gap: 10px;
    height: 24px;
    padding: 0 5px;
    background: #7b7d88;
    border: 1px solid #8d8f98;
    border-radius: 5px;
    color: #45474f;
    font: 16px 'Liberation Sans', sans-serif;
}

.banner {
    position: absolute;
    top: 29px;
    right: 101px;
    padding: 0 72px 0 46px;
    background: rgba(150, 0, 0, 0.57);
    color: #0000fe;
    font: bold 62px/96px 'Liberation Sans', sans-serif;
}

.watermark {
    position: absolute;
    top: 13px;
    right: 15px;
    padding: 0 34px 0 32px;
    height: 76px;
    background: rgba(150, 0, 0, 0.57);
    color: #fff;
    font: bold 62px/50px 'Liberation Sans', sans-serif;
}

/* command line */
.command {
    display: flex;
    border-top: 4px solid #6a6a6a;
    font-family: 'DejaVu Sans Mono', monospace;
}

.command-side {
    width: 32px;
    padding-top: 6px;
    display: flex;
    flex-direction: column;
    align-items: center;
    gap: 10px;
    background: linear-gradient(#777, #3c3c3c);
}

.command-text {
    flex: 1;
    color: #111;
}

.history {
    height: 40px;
    padding: 15px 3px 0;
    background: #cacaca;
    border-bottom: 1px solid #888;
}

.prompt {
    display: flex;
    align-items: center;
    height: 32px;
    padding-left: 7px;
    background: #fdfdfd;
    white-space: nowrap;
}

.prompt b {
    margin: 0 10px 0 8px;
}

.prompt button {
    margin-right: 7px;
    padding: 1px 2px;
    background: #d6d6d6;
    border-radius: 4px;
}

.prompt button:last-of-type {
    margin-right: 0;
}

.prompt i {
    font-style: normal;
    color: #1c14a8;
}

/* layout tabs and status bar */
.status {
    display: flex;
    justify-content: space-between;
    height: 42px;
    background: #323232;
    border-top: 1px solid #777;
}

.layouts {
    display: flex;
    padding-left: 16px;
}

.layouts button {
    height: 25px;
    padding: 0 16px;
    background: #484848;
    color: #aaa;
    clip-path: polygon(0 0, 100% 0, calc(100% - 4px) 20%, calc(100% - 8px) 80%, calc(100% - 14px) 100%, 14px 100%, 8px 80%, 4px 20%);
}

.layouts .active {
    background: linear-gradient(#555, #808080);
    color: #fff;
    font-weight: bold;
}

.layouts .add {
    padding: 0 10px;
    margin-left: 4px;
}

.status-cells {
    display: flex;
    gap: 2px;
    height: 39px;
    padding-bottom: 1px;
}

.cell {
    display: flex;
    align-items: center;
    gap: 11px;
    padding: 0 5px;
    background: #484848;
    border: 1px solid #7a7a7a;
    color: #ccc;
}

.coords {
    width: 257px;
    justify-content: flex-end;
    padding-right: 8px;
    color: #aaa;
    font-size: 17px;
}

.model {
    color: #fff;
    font-weight: 500;
}

.scales {
    gap: 10px;
}

.tight {
    gap: 4px;
}

.last {
    border-right: none;
    padding-right: 0;
}

.lit {
    color: #2f86e8;
}

.scale {
    display: flex;
    align-items: center;
    gap: 8px;
    color: #eee;
}

/* Windows taskbar */
.taskbar {
    display: flex;
    align-items: center;
    gap: 6px;
    height: 55px;
    background: linear-gradient(100deg, #440404 30%, #561313 38%, #4c0606 50%, #561313 60%, #450404 70%, #4a0606 85%, #360808);
    border-top: 2px solid #7d4443;
}

.start {
    width: 77px;
    display: flex;
    justify-content: center;
}

.task {
    width: 81px;
    height: 53px;
    display: flex;
    align-items: center;
    justify-content: center;
}

.task.open {
    background: linear-gradient(150deg, #a87878, #5a1a1a 60%, #7c3434);
    border: 1px solid #c0a0a0;
    border-radius: 3px;
}

.task.current {
    background: linear-gradient(150deg, #d8bcbc, #a07070 60%, #b88c8c);
    border-color: #eedada;
}

.task-letter {
    font: bold 9px 'Open Sans', sans-serif;
    text-anchor: middle;
    fill: #222;
}

.tray {
    flex: 1;
    display: flex;
    align-items: center;
    justify-content: flex-end;
    gap: 16px;
}

.clock {
    display: flex;
    flex-direction: column;
    align-items: center;
    line-height: 24px;
}

.show-desktop {
    width: 10px;
    height: 53px;
    background: linear-gradient(#8a5050, #3a0808);
    border: 1px solid #8a5a5a;
}
```
